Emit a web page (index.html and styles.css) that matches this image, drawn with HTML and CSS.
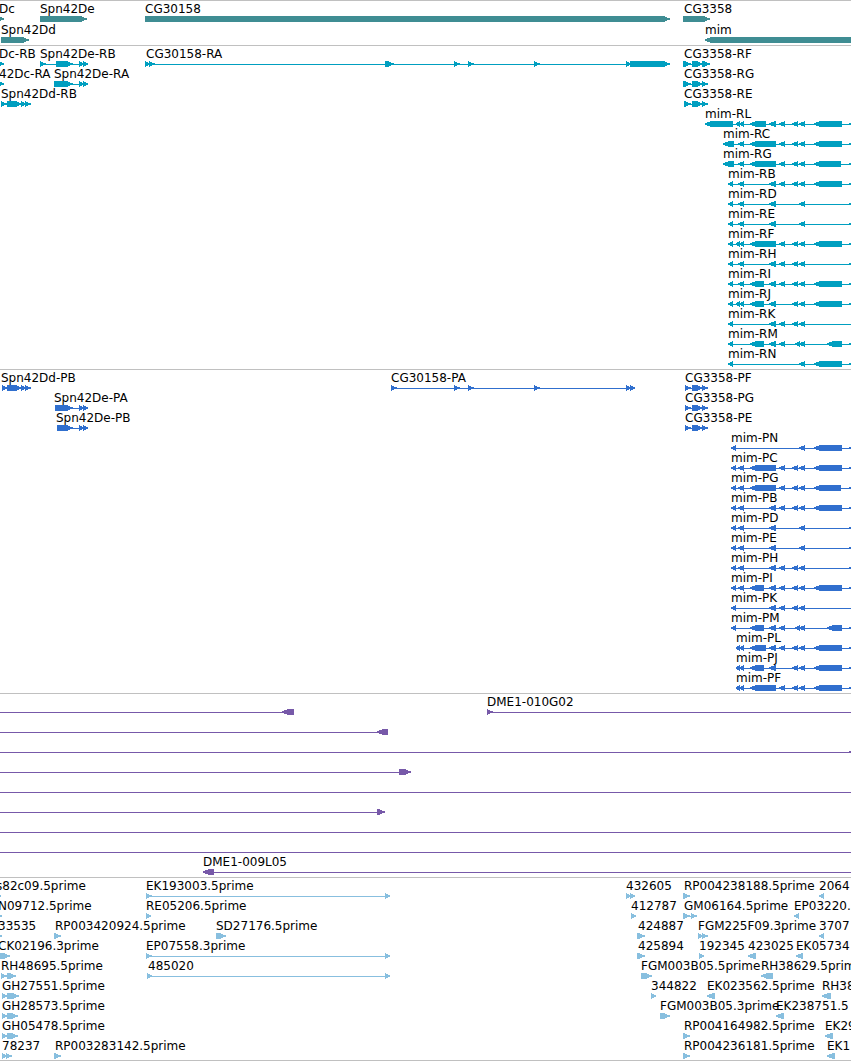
FILE: index.html
```html
<!DOCTYPE html>
<html lang="en">
<head>
<meta charset="utf-8">
<title>Genome browser</title>
<link rel="stylesheet" href="styles.css">
</head>
<body>
<main class="browser">
  <section class="track track-gene" id="gene" aria-label="Genes"></section>
  <section class="track track-mrna" id="mrna" aria-label="Transcripts"></section>
  <section class="track track-cds" id="cds" aria-label="Coding sequences"></section>
  <section class="track track-bac" id="bac" aria-label="BACs"></section>
  <section class="track track-est" id="est" aria-label="ESTs"></section>
</main>
<script src="tracks.js"></script>
</body>
</html>
```

FILE: styles.css
```css
body {
  margin: 0;
  background: #fff;
  color: #000;
  font-family: "DejaVu Sans", sans-serif;
  font-size: 12px;
  line-height: 14px;
}

.browser {
  overflow: hidden;
}

.track {
  display: flex;
  flex-direction: column;
  padding: 1px 0 2px;
  border-top: 1px solid #c0c0c0;
}

.track-gene {
  gap: 1px;
  color: #3f8d93;
}

.track-mrna {
  color: #009fc0;
}

.track-cds {
  color: #306fce;
}

.track-bac {
  color: #7759a9;
}

.track-est {
  padding-bottom: 1px;
  border-bottom: 1px solid #c0c0c0;
  color: #88bfdf;
}

.row {
  position: relative;
  padding-top: 14px;
}

.label {
  position: absolute;
  top: 0;
  color: #000;
  white-space: nowrap;
}

.glyphs {
  display: block;
  width: 100%;
  height: 6px;
  fill: currentColor;
  shape-rendering: crispEdges;
}
```

FILE: tracks.js
```js
// feature: [label, labelX, strand, exons, openLeft, openRight]
const R = 1, L = -1;
const a = [738, 744], d = [736, 740], e = [739, 744];
const big = [750, 776], mid = [750, 764], wide = [750, 766];
const f = [769, 776], g = [779, 785], h = [792, 798], i = [799, 805], j = [795, 800];
const box = [814, 842], shortBox = [814, 841], small = [827, 842], edge = [849, 857];
const mim = (name, x, exons) => [[name, x, L, exons, false, true]];
const span = [['', 0, R, [], true, true]];
const cg = (name, x, from, to) => [name, 684 + x, R, [[from, 691], [692, 703], [702, to]]];

const tracks = {
  gene: [
    [['Dc', -1, R, [[-9, 4]]], ['Spn42De', 40, R, [[40, 87]]], ['CG30158', 145, R, [[145, 670]]], ['CG3358', 684, R, [[683, 710]]]],
    [['Spn42Dd', 1, R, [[1, 29]]], ['mim', 705, L, [[705, 2000]]]]
  ],
  mrna: [
    [['Dc-RB', -1, R, [[-9, 4]]], ['Spn42De-RB', 40, R, [[40, 46], [56, 73], [79, 84], [83, 88]]],
      ['CG30158-RA', 146, R, [[145, 150], [149, 155], [385, 394], [454, 460], [468, 474], [534, 540], [626, 631], [630, 670]]],
      cg('CG3358-RF', 0, 683, 710)],
    [['42Dc-RA', -1, R, [[-9, 4]]], ['Spn42De-RA', 54, R, [[54, 73], [79, 84], [83, 88]]], cg('CG3358-RG', 0, 683, 708)],
    [['Spn42Dd-RB', 1, R, [[1, 7], [7, 22], [21, 26], [25, 31]]], cg('CG3358-RE', 0, 684, 708)],
    mim('mim-RL', 705, [[705, 733], d, e, wide, f, g, h, i, box, edge]),
    mim('mim-RC', 723, [[723, 734], a, big, g, h, i, box, edge]),
    mim('mim-RG', 723, [[723, 734], a, big, g, h, i, shortBox, edge]),
    mim('mim-RB', 728, [[728, 733], a, f, g, h, i, box, edge]),
    mim('mim-RD', 728, [[728, 733], a, f, i, edge]),
    mim('mim-RE', 728, [[728, 733], a, f, i, edge]),
    mim('mim-RF', 728, [[728, 733], d, e, big, g, h, i, box, edge]),
    mim('mim-RH', 728, [[728, 733], a, f, g, h, i, edge]),
    mim('mim-RI', 728, [[728, 733], a, mid, f, g, h, i, box, edge]),
    mim('mim-RJ', 728, [[728, 733], d, e, mid, f, h, i, box, edge]),
    mim('mim-RK', 728, [[728, 733], f, g, h, i]),
    mim('mim-RM', 728, [[728, 733], mid, f, g, j, i, small, edge]),
    mim('mim-RN', 728, [[728, 733], i, box, edge])
  ],
  cds: [
    [['Spn42Dd-PB', 1, R, [[2, 7], [7, 22], [21, 26], [25, 31]]],
      ['CG30158-PA', 391, R, [[391, 397], [454, 460], [468, 474], [534, 540], [626, 631], [630, 635]]],
      cg('CG3358-PF', 1, 685, 708)],
    [['Spn42De-PA', 54, R, [[55, 73], [79, 84], [83, 88]]], cg('CG3358-PG', 1, 685, 708)],
    [['Spn42De-PB', 56, R, [[57, 73], [79, 84], [83, 88]]], cg('CG3358-PE', 1, 685, 708)],
    mim('mim-PN', 731, [[731, 736], i, box, edge]),
    mim('mim-PC', 731, [[731, 736], a, big, g, h, i, box, edge]),
    mim('mim-PG', 731, [[731, 736], a, big, g, h, i, shortBox, edge]),
    mim('mim-PB', 731, [[731, 736], a, f, g, h, i, box, edge]),
    mim('mim-PD', 731, [[731, 736], a, f, i, edge]),
    mim('mim-PE', 731, [[731, 736], a, f, i, edge]),
    mim('mim-PH', 731, [[731, 736], a, f, g, h, i, edge]),
    mim('mim-PI', 731, [[731, 736], a, mid, f, g, h, i, box, edge]),
    mim('mim-PK', 731, [[731, 736], f, g, h, i]),
    mim('mim-PM', 731, [[731, 736], mid, f, g, j, i, small, edge]),
    mim('mim-PL', 736, [d, e, wide, f, g, h, i, box, edge]),
    mim('mim-PJ', 736, [d, e, mid, f, h, i, box, edge]),
    mim('mim-PF', 736, [d, e, big, g, h, i, box, edge])
  ],
  bac: [
    [['', 0, L, [[282, 294]], true], ['DME1-010G02', 487, R, [[487, 493]], false, true]],
    [['', 0, L, [[377, 388]], true]],
    [['', 0, L, [edge], true, true]],
    [['', 0, R, [[399, 411]], true]],
    span,
    [['', 0, R, [[377, 385]], true]],
    span,
    span,
    [['DME1-009L05', 203, L, [[203, 214]], false, true]]
  ],
  est: [
    [['s82c09.5prime', -4, R, [[-5, 1]]], ['EK193003.5prime', 146, R, [[146, 152], [385, 390]]],
      ['432605', 626, R, [[626, 631], [630, 635]]], ['RP004238188.5prime', 684, R, [[683, 690]]], ['2064', 819, L, [[819, 824]]]],
    [['N09712.5prime', -2, R, [[-5, 2]]], ['RE05206.5prime', 146, R, [[146, 151]]], ['412787', 631, R, [[631, 636]]],
      ['GM06164.5prime', 684, R, [[683, 690], [691, 697]]], ['EP03220.', 794, L, [[794, 799]]]],
    [['33535', -2, R, [[-5, 2]]], ['RP003420924.5prime', 55, R, [[54, 61]]], ['SD27176.5prime', 216, R, [[216, 226]]],
      ['424887', 638, R, [[637, 645]]], ['FGM225F09.3prime', 698, R, [[698, 703], [702, 708]]], ['3707', 819, L, [[819, 824]]]],
    [['CK02196.3prime', -2, R, [[-5, 10]]], ['EP07558.3prime', 146, R, [[146, 152], [385, 390]]], ['425894', 638, R, [[637, 645]]],
      ['192345', 699, R, [[699, 704]]], ['423025', 748, L, [[748, 756]]], ['EK05734', 796, L, [[796, 803]]]],
    [['RH48695.5prime', 1, R, [[1, 7], [7, 16]]], ['485020', 148, R, [[147, 152], [385, 390]]],
      ['FGM003B05.5prime', 641, R, [[641, 652]]], ['RH38629.5prim', 761, L, [[761, 773]]]],
    [['GH27551.5prime', 2, R, [[2, 8], [7, 19]]], ['344822', 651, R, [[651, 656]]], ['EK023562.5prime', 707, L, [[707, 715]]],
      ['RH38', 822, L, [[822, 831]]]],
    [['GH28573.5prime', 2, R, [[2, 8], [7, 18]]], ['FGM003B05.3prime', 660, R, [[660, 670]]], ['EK238751.5', 776, L, [[776, 784]]]],
    [['GH05478.5prime', 2, R, [[2, 8], [7, 18]]], ['RP004164982.5prime', 684, R, [[683, 690]]], ['EK29', 825, L, [[825, 833]]]],
    [['78237', 2, R, [[2, 7], [6, 12]]], ['RP003283142.5prime', 55, R, [[54, 61]]], ['RP004236181.5prime', 684, R, [[683, 690]]],
      ['EK1', 827, L, [[827, 835]]]]
  ]
};

// an exon is a bar whose downstream end tapers to a point over up to six pixels
function exon([from, to], strand) {
  const head = Math.min(6, to - from);
  return strand === R
    ? `<path d="M${from} 0H${to - head}L${to + 1} 3L${to - head} 6H${from}Z"/>`
    : `<path d="M${to} 0H${from + head}L${from - 1} 3L${from + head} 6H${to}Z"/>`;
}

function glyph([, , strand, exons, openLeft, openRight]) {
  const from = openLeft ? 0 : exons[0][0];
  const width = openRight ? '100%' : exons[exons.length - 1][1] - from - (strand === R ? 1 : 0);
  const line = exons.length > 1 || openLeft || openRight
    ? `<rect x="${from}" y="3" width="${width}" height="1"/>` : '';
  return line + exons.map(x => exon(x, strand)).join('');
}

for (const [id, rows] of Object.entries(tracks)) {
  document.getElementById(id).innerHTML = rows.map(features => `<div class="row">${
    features.filter(x => x[0]).map(x => `<span class="label" style="left:${x[1]}px">${x[0]}</span>`).join('')
  }<svg class="glyphs" aria-hidden="true">${features.map(glyph).join('')}</svg></div>`).join('');
}
```
